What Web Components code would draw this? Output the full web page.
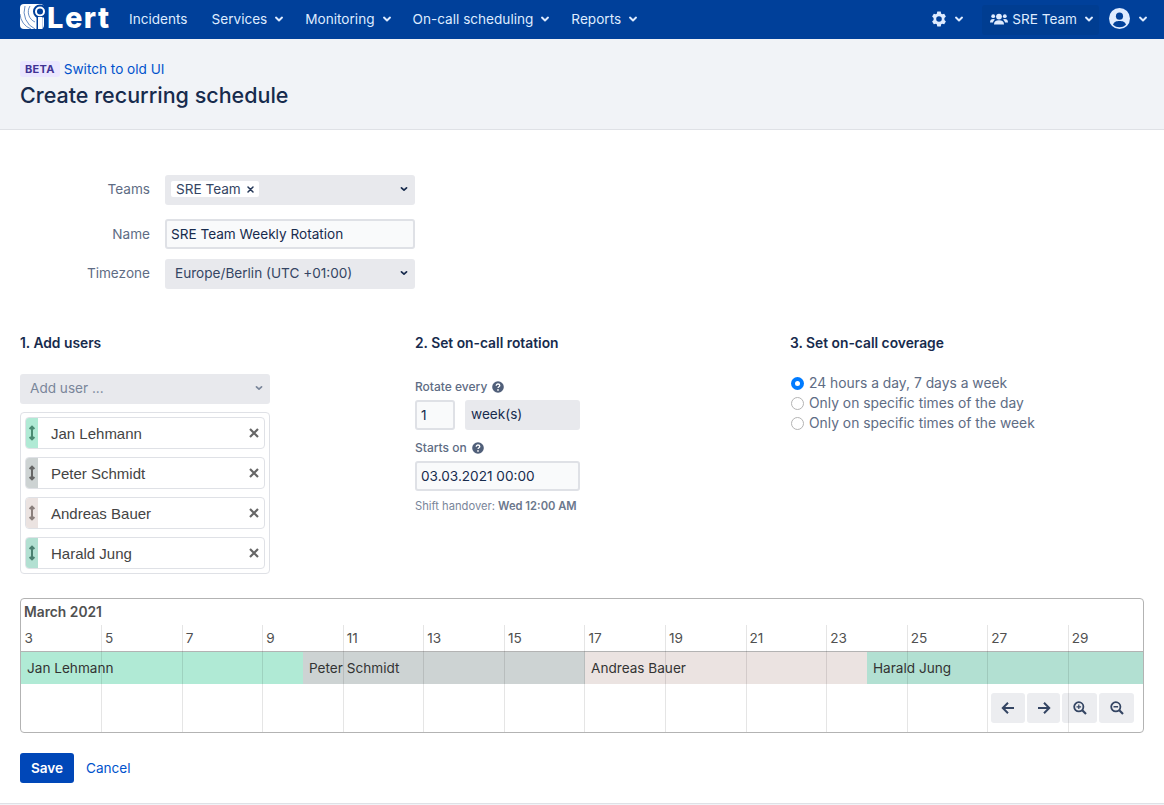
<!DOCTYPE html>
<html>
<head>
<meta charset="utf-8">
<title>Create recurring schedule</title>
<style>
  html, body { margin: 0; padding: 0; height: 805px; overflow: hidden; background: #fff; }
  body { font-family: Inter, "Liberation Sans", sans-serif; font-size: 13.6px; color: #172b4d; }
</style>
</head>
<body>
<app-nav></app-nav>
<page-header></page-header>
<schedule-form></schedule-form>
<script>
const CHEVRON = `<svg width="10" height="10" viewBox="0 0 10 10" fill="none" stroke="currentColor" stroke-width="2" stroke-linecap="round" stroke-linejoin="round"><path d="M2 3.6 L5 6.4 L8 3.6"/></svg>`;
const HELP = `<svg width="12" height="12" viewBox="0 0 12 12"><circle cx="6" cy="6" r="5.8" fill="#505f79"/><path d="M4.2 4.7 C4.2 3.6 5 3 6 3 C7 3 7.8 3.6 7.8 4.5 C7.8 5.7 6 5.7 6 7" fill="none" stroke="#fff" stroke-width="1.3"/><circle cx="6" cy="8.9" r=".85" fill="#fff"/></svg>`;

class NavItem extends HTMLElement {
    connectedCallback() {
        const shadow = this.attachShadow({ mode: "open" });
        const chevron = this.hasAttribute("menu") ? `<span class="chev">${CHEVRON}</span>` : "";
        shadow.innerHTML = `
        <style>
          :host { display: flex; align-items: center; gap: 7px; height: 30px; box-sizing: border-box; padding: 0 8px 1px; color: #deebff; border-radius: 3px; white-space: nowrap; }
          :host(:not([menu])) { margin-right: 3px; }
          :host([active]) { background: #003d91; padding-right: 5px; }
          svg { display: block; flex: none; }
        </style>
        <slot></slot>${chevron}`;
    }
}
customElements.define("nav-item", NavItem);

class AppNav extends HTMLElement {
    connectedCallback() {
        const shadow = this.attachShadow({ mode: "open" });
        shadow.innerHTML = `
        <style>
          :host { display: flex; align-items: center; height: 39px; background: #00409a; padding: 0 8px 0 20px; box-sizing: border-box; }
          .logo { display: flex; align-items: center; width: 101px; height: 39px; flex: none; color: #fff; }
          .logo svg { display: block; flex: none; margin-top: -6px; }
          .logo span { font: 800 29px/39px Inter, sans-serif; margin-left: 1px; margin-top: -4px; letter-spacing: 1.5px; }
          nav { display: flex; align-items: center; gap: 5px; }
          .right { margin-left: auto; display: flex; align-items: center; gap: 1px; }
          .gear { margin-right: 9px; }
          svg { display: block; }
        </style>
        <div class="logo">
          <svg width="26" height="25" viewBox="0 0 26 25">
            <rect x="0" y="0" width="24" height="25" rx="4" fill="#fff"/>
            <g fill="none" stroke="#00409a" stroke-width=".8" opacity=".75">
              <path d="M11 25 A17 17 0 0 1 0 10"/><path d="M15 25 A19 19 0 0 1 5 2"/><path d="M15 18 A11 11 0 0 1 10 2"/>
            </g>
            <circle cx="20" cy="7.5" r="6" fill="#fff" stroke="#00409a" stroke-width="2"/>
            <circle cx="20" cy="7.5" r="3" fill="#00409a"/>
            <path d="M16.5 12.5 H22.5 V25 H16.5Z" fill="#00409a"/>
            <rect x="18" y="13" width="4.5" height="12" fill="#fff"/>
          </svg>
          <span>Lert</span>
        </div>
        <nav>
          <nav-item>Incidents</nav-item>
          <nav-item menu>Services</nav-item>
          <nav-item menu>Monitoring</nav-item>
          <nav-item menu>On-call scheduling</nav-item>
          <nav-item menu>Reports</nav-item>
        </nav>
        <div class="right">
          <nav-item menu class="gear">
            <svg width="16" height="16" viewBox="0 0 16 16"><path fill="#deebff" fill-rule="evenodd" d="M6.300.6h3.400l.5 2.100 1 .6 2-.6 1.700 2.900-1.500 1.500v1.800l1.500 1.500-1.700 2.900-2-.6-1 .6-.5 2.100H6.300l-.5-2.100-1-.6-2 .6-1.700-2.900 1.500-1.500V7.100L1.100 5.600l1.700-2.900 2 .6 1-.6zM8 5.200a2.800 2.800 0 1 0 0 5.600 2.800 2.800 0 0 0 0-5.600z"/></svg>
          </nav-item>
          <nav-item menu active>
            <svg width="18" height="14" viewBox="0 0 18 14" fill="#deebff" style="margin-right:-3px"><circle cx="9" cy="4.6" r="2.9"/><circle cx="3.2" cy="4.2" r="1.9"/><circle cx="14.8" cy="4.2" r="1.9"/><path d="M4 12.5 C4 9.4 5.8 8.2 9 8.2 C12.2 8.2 14 9.4 14 12.5Z"/><path d="M0 10.5 C0 8 1.2 7 3.2 7 C4 7 4.6 7.2 5 7.5 C3.8 8.4 3.2 9.300 3 10.500Z"/><path d="M18 10.500 C18 8 16.800 7 14.800 7 C14 7 13.400 7.200 13 7.500 C14.200 8.400 14.800 9.300 15 10.500Z"/></svg>
            SRE Team
          </nav-item>
          <nav-item menu>
            <svg width="21" height="21" viewBox="0 0 20 20" style="margin:-2px 1px 0 1px"><circle cx="10" cy="10" r="10" fill="#deebff"/><circle cx="10" cy="7.8" r="3.400" fill="#00409a"/><path d="M3.800 16 C4.800 13 7 12.400 10 12.400 C13 12.400 15.200 13 16.200 16 C14.500 17.600 12.300 18.400 10 18.400 C7.700 18.400 5.500 17.600 3.800 16Z" fill="#00409a"/></svg>
          </nav-item>
        </div>`;
    }
}
customElements.define("app-nav", AppNav);

class PageHeader extends HTMLElement {
    connectedCallback() {
        const shadow = this.attachShadow({ mode: "open" });
        shadow.innerHTML = `
        <style>
          :host { display: block; height: 91px; box-sizing: border-box; background: #f1f3f7; border-bottom: 1px solid #dfe1e6; padding: 22px 20px 0; }
          .top { display: flex; align-items: center; gap: 4px; height: 16px; }
          .beta { background: #eae6ff; color: #403294; font-size: 11px; font-weight: 700; letter-spacing: .3px; line-height: 16px; padding: 0 5px; border-radius: 3px; }
          a { color: #0052cc; font-size: 13.6px; text-decoration: none; }
          h1 { margin: 3px 0 0; font-size: 21.5px; line-height: 30px; font-weight: 500; color: #172b4d; }
        </style>
        <div class="top"><span class="beta">BETA</span><a>Switch to old UI</a></div>
        <h1>Create recurring schedule</h1>`;
    }
}
customElements.define("page-header", PageHeader);

class FormRow extends HTMLElement {
    connectedCallback() {
        const shadow = this.attachShadow({ mode: "open" });
        shadow.innerHTML = `
        <style>
          :host { display: grid; grid-template-columns: 130px 250px; column-gap: 15px; align-items: center; }
          .label { text-align: right; color: #5e6c84; font-size: 13.6px; padding-bottom: 2px; }
          :host([flat]) .label { padding-bottom: 0; }
        </style>
        <div class="label">${this.getAttribute("label")}</div>
        <slot></slot>`;
    }
}
customElements.define("form-row", FormRow);

class SelectBox extends HTMLElement {
    connectedCallback() {
        const shadow = this.attachShadow({ mode: "open" });
        shadow.innerHTML = `
        <style>
          :host { display: flex; align-items: center; justify-content: space-between; height: 30px; box-sizing: border-box; padding: 0 10px 2px; background: #e8e9ed; border-radius: 3px; color: #344563; font-size: 13.6px; white-space: nowrap; }
          :host([placeholder]) { color: #7a869a; }
          .chev { color: #172b4d; margin-right: -4px; transform: scale(.85); }
          :host([placeholder]) .chev { color: #7a869a; }
          svg { display: block; }
        </style>
        <span><slot></slot></span><span class="chev">${CHEVRON}</span>`;
    }
}
customElements.define("select-box", SelectBox);

class TextBox extends HTMLElement {
    connectedCallback() {
        const shadow = this.attachShadow({ mode: "open" });
        shadow.innerHTML = `
        <style>
          :host { display: flex; align-items: center; height: 30px; box-sizing: border-box; padding: 0 4px; background: #f9fafb; border: 2px solid #dfe1e6; border-radius: 3px; color: #172b4d; font-size: 13.6px; white-space: nowrap; }
        </style>
        <slot></slot>`;
    }
}
customElements.define("text-box", TextBox);

class TeamTag extends HTMLElement {
    connectedCallback() {
        const shadow = this.attachShadow({ mode: "open" });
        shadow.innerHTML = `
        <style>
          :host { display: inline-flex; align-items: center; gap: 6px; height: 16px; margin-left: -4px; padding: 0 5px; background: #fff; border-radius: 2px; color: #344563; font-size: 13.6px; }
          svg { display: block; }
        </style>
        <slot></slot>
        <svg width="7" height="7" viewBox="0 0 7 7" stroke="#253858" stroke-width="1.500" stroke-linecap="round"><path d="M1 1 L6 6 M6 1 L1 6"/></svg>`;
    }
}
customElements.define("team-tag", TeamTag);

class UserItem extends HTMLElement {
    connectedCallback() {
        const shadow = this.attachShadow({ mode: "open" });
        const color = this.getAttribute("color");
        const arrow = this.getAttribute("arrow");
        shadow.innerHTML = `
        <style>
          :host { display: flex; align-items: center; height: 32px; box-sizing: border-box; border: 1px solid #dfe1e6; border-radius: 4px; background: #fff; color: #444; font: 15px "Liberation Sans", Arial, sans-serif; }
          .handle { width: 12px; height: 30px; flex: none; background: ${color}; border-radius: 3px 0 0 3px; display: flex; align-items: center; justify-content: center; }
          .name { flex: 1; margin-left: 13px; }
          svg { display: block; }
          .x { margin-right: 5px; }
        </style>
        <div class="handle">
          <svg width="8" height="16" viewBox="0 0 8 16" fill="none" stroke="${arrow}" stroke-width="2"><path d="M4 2 V14"/><path d="M1.600 4 L4 1.600 L6.400 4 M1.600 12 L4 14.400 L6.400 12"/></svg>
        </div>
        <div class="name"><slot></slot></div>
        <svg class="x" width="10" height="10" viewBox="0 0 10 10" stroke="#666" stroke-width="2.200"><path d="M1 1 L9 9 M9 1 L1 9"/></svg>`;
    }
}
customElements.define("user-item", UserItem);

class RadioOption extends HTMLElement {
    connectedCallback() {
        const shadow = this.attachShadow({ mode: "open" });
        const dot = this.hasAttribute("checked")
            ? `<circle cx="6.500" cy="6.500" r="6.500" fill="#007bff"/><circle cx="6.500" cy="6.500" r="2.500" fill="#fff"/>`
            : `<circle cx="6.500" cy="6.500" r="6" fill="#fff" stroke="#b3b3b3"/>`;
        shadow.innerHTML = `
        <style>
          :host { display: flex; align-items: center; gap: 5px; height: 20px; color: #5e6c84; font-size: 13.85px; padding-left: 1px; }
          svg { display: block; flex: none; }
        </style>
        <svg width="13" height="13" viewBox="0 0 13 13">${dot}</svg><slot></slot>`;
    }
}
customElements.define("radio-option", RadioOption);

class ChartButton extends HTMLElement {
    connectedCallback() {
        const shadow = this.attachShadow({ mode: "open" });
        shadow.innerHTML = `
        <style>
          :host { display: flex; align-items: center; justify-content: center; height: 30px; background: rgba(9,30,66,.08); border-radius: 3px; }
          ::slotted(svg) { display: block; }
        </style>
        <slot></slot>`;
    }
}
customElements.define("chart-button", ChartButton);

class ScheduleChart extends HTMLElement {
    connectedCallback() {
        const shadow = this.attachShadow({ mode: "open" });
        const days = [3,5,7,9,11,13,15,17,19,21,23,25,27,29];
        const step = 80.57;
        const cells = days.map(d => `<div class="day">${d}</div>`).join("");
        const lines = days.slice(1).map((d, i) => `<i style="left:${Math.floor((i + 1) * step)}px"></i>`).join("");
        shadow.innerHTML = `
        <style>
          :host { display: block; position: relative; height: 135px; box-sizing: border-box; border: 1px solid #b3b3b3; border-radius: 4px; overflow: hidden; background: #fff; color: #333; font-size: 13.6px; }
          .month { height: 27px; line-height: 26px; padding-left: 3px; font-weight: 600; color: #505050; font-size: 13.8px; }
          .days { display: grid; grid-template-columns: repeat(14, ${step}px); height: 26px; box-sizing: border-box; border-bottom: 1px solid #b3b3b3; line-height: 24px; color: #505050; }
          .day { padding-left: 3.5px; }
          .bars { display: flex; height: 32px; }
          .bar { line-height: 32px; padding-left: 6px; box-sizing: border-box; flex: none; color: #333; }
          .lines i { position: absolute; top: 26px; bottom: 0; width: 1px; background: rgba(0,0,0,.1); }
          .tools { position: absolute; top: 94px; right: 9px; display: flex; gap: 2px; }
          svg { display: block; }
        </style>
        <div class="month">March 2021</div>
        <div class="days">${cells}</div>
        <div class="bars">
          <div class="bar" style="width:282px;background:#b0ead5">Jan Lehmann</div>
          <div class="bar" style="width:282px;background:#cdd3d3">Peter Schmidt</div>
          <div class="bar" style="width:282px;background:#ebe3e1">Andreas Bauer</div>
          <div class="bar" style="width:276px;background:#b2e0d2">Harald Jung</div>
        </div>
        <div class="lines">${lines}</div>
        <div class="tools">
          <chart-button style="width:34px"><svg width="14" height="14" viewBox="0 0 14 14" fill="none" stroke="#344563" stroke-width="2"><path d="M13 7 H2"/><path d="M7 1.800 L1.800 7 L7 12.200"/></svg></chart-button>
          <chart-button style="width:33px"><svg width="14" height="14" viewBox="0 0 14 14" fill="none" stroke="#344563" stroke-width="2"><path d="M1 7 H12"/><path d="M7 1.800 L12.200 7 L7 12.200"/></svg></chart-button>
          <chart-button style="width:35px"><svg width="14" height="14" viewBox="0 0 14 14" fill="none" stroke="#344563"><circle cx="5.800" cy="5.800" r="4.600" stroke-width="1.800"/><path d="M9.300 9.300 L13 13" stroke-width="2.200"/><path d="M3.500 5.800 H8.100 M5.800 3.500 V8.100" stroke-width="1.200"/></svg></chart-button>
          <chart-button style="width:35px"><svg width="14" height="14" viewBox="0 0 14 14" fill="none" stroke="#344563"><circle cx="5.800" cy="5.800" r="4.600" stroke-width="1.800"/><path d="M9.300 9.300 L13 13" stroke-width="2.200"/><path d="M3.500 5.800 H8.100" stroke-width="1.400"/></svg></chart-button>
        </div>`;
    }
}
customElements.define("schedule-chart", ScheduleChart);

class ScheduleForm extends HTMLElement {
    connectedCallback() {
        const shadow = this.attachShadow({ mode: "open" });
        shadow.innerHTML = `
        <style>
          :host { display: block; padding: 45px 20px 0; height: 675px; box-sizing: border-box; }
          .top { display: flex; flex-direction: column; }
          form-row + form-row { margin-top: 14px; }
          form-row:last-child { margin-top: 10px; }
          .cols { display: grid; grid-template-columns: 395px 375px 1fr; margin-top: 45px; height: 264px; }
          h3 { margin: 0; font-size: 13.8px; line-height: 19px; height: 17px; font-weight: 600; color: #172b4d; }
          .add { margin-top: 23px; width: 250px; }
          .list { width: 250px; box-sizing: border-box; margin-top: 8px; padding: 4px; border: 1px solid #dfe1e6; border-radius: 4px; display: flex; flex-direction: column; gap: 8px; }
          .lbl { display: flex; align-items: center; gap: 5px; color: #5e6c84; font-size: 12px; font-weight: 500; line-height: 15px; }
          .lbl.first { margin-top: 28px; }
          .lbl.second { margin-top: 10px; }
          .rot { display: flex; gap: 10px; width: 165px; margin-top: 6px; }
          .rot text-box { width: 40px; flex: none; }
          .rot select-box { flex: 1; color: #172b4d; padding-left: 6px; }
          .starts { width: 165px; margin-top: 6px; }
          .hint { margin-top: 8px; color: #7a869a; font-size: 11.2px; line-height: 14px; }
          .hint b { color: #6b778c; font-weight: 600; }
          .radios { margin-top: 22px; display: flex; flex-direction: column; }
          .actions { display: flex; align-items: center; gap: 12px; margin-top: 20px; }
          .save { display: flex; align-items: center; justify-content: center; width: 54px; height: 30px; background: #0047b8; color: #fff; border-radius: 3px; font-weight: 600; font-size: 13.6px; }
          .cancel { color: #0052cc; }
          .footer { position: absolute; left: 0; right: 0; top: 803px; height: 2px; background: #f1f3f7; border-top: 1px solid #dfe1e6; }
        </style>
        <div class="top">
          <form-row label="Teams"><select-box><team-tag>SRE Team</team-tag></select-box></form-row>
          <form-row label="Name" flat><text-box>SRE Team Weekly Rotation</text-box></form-row>
          <form-row label="Timezone"><select-box>Europe/Berlin (UTC +01:00)</select-box></form-row>
        </div>
        <div class="cols">
          <section>
            <h3>1. Add users</h3>
            <select-box class="add" placeholder>Add user ...</select-box>
            <div class="list">
              <user-item color="#b0ead5" arrow="#4a8a72">Jan Lehmann</user-item>
              <user-item color="#cdd3d3" arrow="#666">Peter Schmidt</user-item>
              <user-item color="#ebe3e1" arrow="#8a7f7c">Andreas Bauer</user-item>
              <user-item color="#b2e0d2" arrow="#4a7f70">Harald Jung</user-item>
            </div>
          </section>
          <section>
            <h3>2. Set on-call rotation</h3>
            <div class="lbl first">Rotate every ${HELP}</div>
            <div class="rot"><text-box>1</text-box><select-box class="unit">week(s)</select-box></div>
            <div class="lbl second">Starts on ${HELP}</div>
            <text-box class="starts">03.03.2021 00:00</text-box>
            <div class="hint">Shift handover: <b>Wed 12:00 AM</b></div>
          </section>
          <section>
            <h3>3. Set on-call coverage</h3>
            <div class="radios">
              <radio-option checked>24 hours a day, 7 days a week</radio-option>
              <radio-option>Only on specific times of the day</radio-option>
              <radio-option>Only on specific times of the week</radio-option>
            </div>
          </section>
        </div>
        <schedule-chart></schedule-chart>
        <div class="actions"><div class="save">Save</div><div class="cancel">Cancel</div></div>
        <div class="footer"></div>`;
        // week(s) has no dropdown arrow in the reference
        shadow.querySelector(".unit").shadowRoot.querySelector(".chev").style.display = "none";
    }
}
customElements.define("schedule-form", ScheduleForm);
</script>
</body>
</html>
